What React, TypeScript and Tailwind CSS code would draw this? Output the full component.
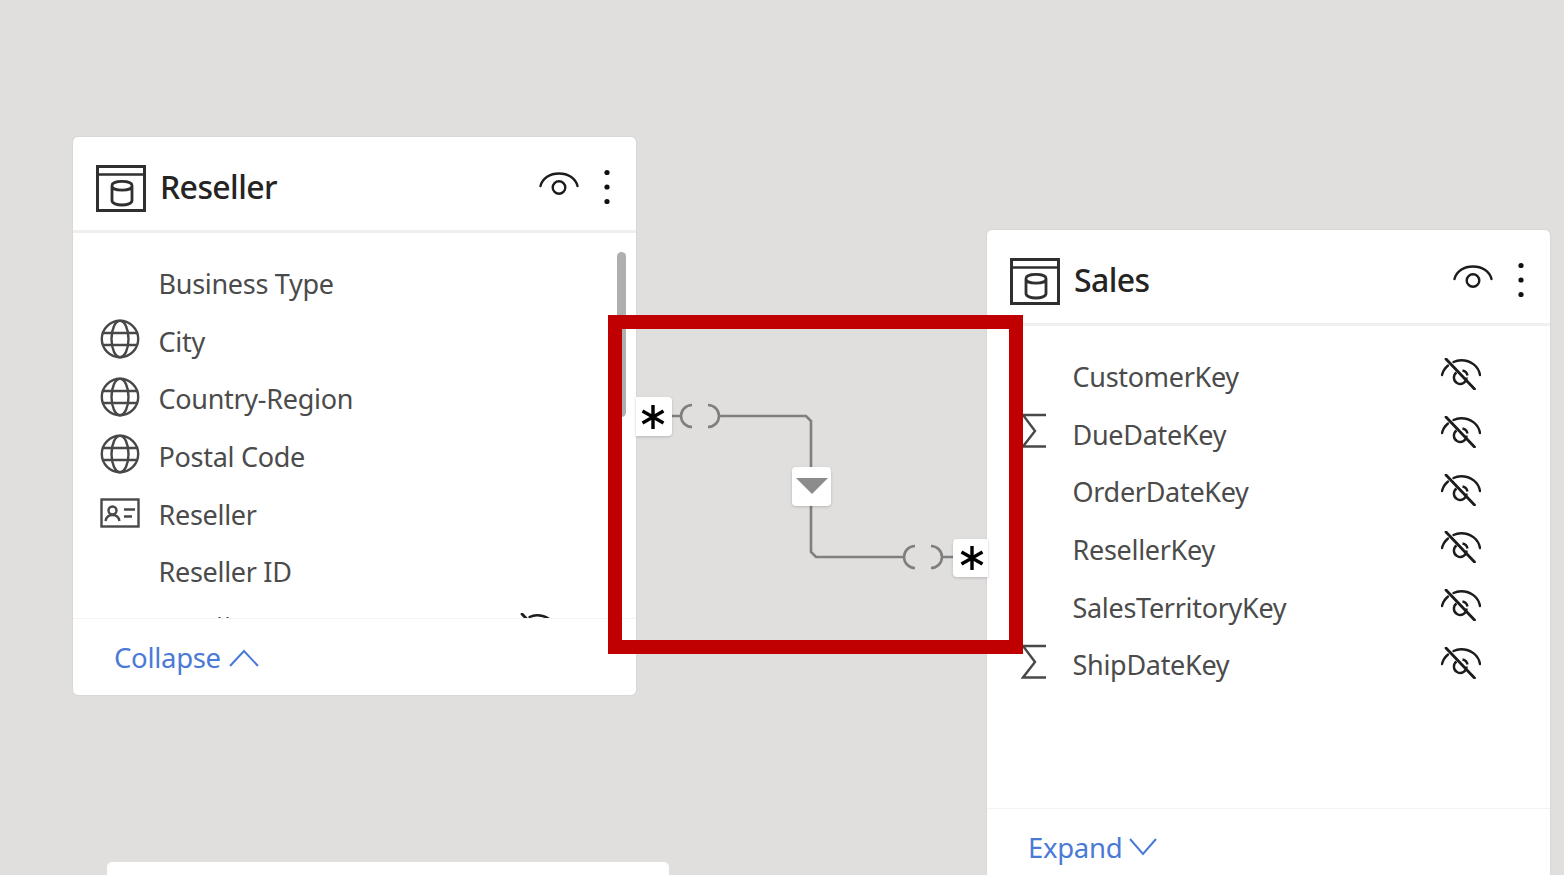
const RESELLER_ROWS = [
  { label: "Business Type" },
  { label: "City", icon: "globe" },
  { label: "Country-Region", icon: "globe" },
  { label: "Postal Code", icon: "globe" },
  { label: "Reseller", icon: "card" },
  { label: "Reseller ID" },
];

const SALES_ROWS = [
  { label: "CustomerKey", hidden: true },
  { label: "DueDateKey", icon: "sigma", hidden: true },
  { label: "OrderDateKey", hidden: true },
  { label: "ResellerKey", hidden: true },
  { label: "SalesTerritoryKey", hidden: true },
  { label: "ShipDateKey", icon: "sigma", hidden: true },
];

function TableIcon() {
  return (
    <svg width="50" height="47" viewBox="0 0 50 47" fill="none" stroke="#2f2f2f" className="mt-[4px] shrink-0">
      <rect x="1.500" y="1.500" width="47" height="44" strokeWidth="3" />
      <path d="M2 9.500h46" strokeWidth="2.600" />
      <path d="M16 20.500c0-5.500 20-5.500 20 0v15c0 6-20 6-20 0z M16 21c0 5.500 20 5.500 20 0" strokeWidth="2.800" />
    </svg>
  );
}

function EyeIcon() {
  return (
    <svg width="40" height="28" viewBox="0 0 40 28" fill="none" stroke="#1c1c1c" strokeWidth="2.400" className="-translate-y-[4px]">
      <path d="M1.500 17C3.500 9 11 4.500 20 4.500S36.500 9 38.500 17" strokeLinecap="round" />
      <circle cx="20" cy="18.500" r="6.300" />
    </svg>
  );
}

function DotsIcon() {
  return (
    <svg width="6" height="36" viewBox="0 0 6 36" fill="#111">
      <circle cx="3" cy="3.500" r="2.600" />
      <circle cx="3" cy="18" r="2.600" />
      <circle cx="3" cy="32.500" r="2.600" />
    </svg>
  );
}

function EyeOffIcon() {
  return (
    <svg width="40" height="32" viewBox="0 0 40 32" fill="none" stroke="#1c1c1c" strokeWidth="2.400" className="shrink-0">
      <path d="M1 17C2 13 4 10 7 7.500M12.500 4C15 2.800 17.500 2.300 20 2.300c10 0 17.500 6 19 14.700" strokeLinecap="round" />
      <path d="M15.500 14.500a6.300 6.300 0 1 0 10 5M21.500 12.500a6.300 6.300 0 0 1 5 5" />
      <path d="M5 1 33.500 31" strokeWidth="2.800" strokeLinecap="round" />
    </svg>
  );
}

function GlobeIcon() {
  return (
    <svg width="40" height="40" viewBox="0 0 40 40" fill="none" stroke="#484848" strokeWidth="2.400" className="-mt-[4px]">
      <circle cx="20" cy="20" r="18.200" />
      <ellipse cx="20" cy="20" rx="8.500" ry="18.200" />
      <path d="M3.500 14h33M3.500 26h33" />
    </svg>
  );
}

function CardIcon() {
  return (
    <svg width="40" height="32" viewBox="0 0 40 32" fill="none" stroke="#484848" strokeWidth="2.400">
      <rect x="1.500" y="1.500" width="37" height="27" />
      <circle cx="12.500" cy="12.500" r="4" />
      <path d="M5.500 23c.8-4 3.500-6 7-6s6.200 2 7 6" />
      <path d="M24 11.500h11M24 18.500h8" />
    </svg>
  );
}

function SigmaIcon() {
  return (
    <svg width="26" height="36" viewBox="0 0 26 36" fill="none" stroke="#484848" strokeWidth="2.400" className="-mt-[6px]">
      <path d="M25 2H2l12 16L2 33.500h23" />
    </svg>
  );
}

function RowIcon({ name }: { name?: string }) {
  if (name === "globe") return <GlobeIcon />;
  if (name === "card") return <CardIcon />;
  if (name === "sigma") return <SigmaIcon />;
  return null;
}

function FieldRow({ label, icon, hidden }: { label: string; icon?: string; hidden?: boolean }) {
  return (
    <div className="flex h-[57.7px] shrink-0 items-center">
      <div className="ml-[27px] flex h-full w-[40px] shrink-0 items-center justify-center">
        <RowIcon name={icon} />
      </div>
      <span className="ml-[18.500px] text-[27px] leading-none tracking-[-0.3px] text-[#4b4b4b]">{label}</span>
      {hidden && (
        <span className="absolute left-[454px] -translate-y-[2px]">
          <EyeOffIcon />
        </span>
      )}
    </div>
  );
}

function TableCard({
  title,
  rows,
  action,
  position,
  listHeight,
  extraRow,
  scrollbar,
}: {
  title: string;
  rows: { label: string; icon?: string; hidden?: boolean }[];
  action: React.ReactNode;
  position: string;
  listHeight: string;
  extraRow?: React.ReactNode;
  scrollbar?: boolean;
}) {
  return (
    <div className={`absolute flex w-[563px] flex-col rounded-[5px] bg-white shadow-[0_0_2px_rgba(0,0,0,0.12)] ${position}`}>
      <div className="flex h-[96px] items-center border-b-[3px] border-[#f0efee] pl-[23px] pt-[6px]">
        <TableIcon />
        <span className="ml-[14px] text-[32px] font-medium leading-none tracking-[-0.6px] text-[#252423]">{title}</span>
        <div className="ml-auto mr-[26px] flex items-center gap-[25px]">
          <EyeIcon />
          <DotsIcon />
        </div>
      </div>
      <div className={`relative flex flex-col overflow-hidden pt-[21.500px] ${listHeight}`}>
        {rows.map((row) => (
          <FieldRow key={row.label} {...row} />
        ))}
        {extraRow}
        {scrollbar && (
          <div className="absolute left-[544px] top-[19px] h-[165px] w-[9px] rounded-[5px] bg-[#afafaf]" />
        )}
      </div>
      <div className="flex h-[77px] items-center border-t border-[#f4f3f2] pl-[41px] pt-[2px] text-[27.500px] leading-none tracking-[-0.3px] text-[#4a7ad6]">
        {action}
      </div>
    </div>
  );
}

function RelationshipLines() {
  return (
    <svg width="400" height="200" viewBox="0 0 400 200" fill="none" stroke="#7f7f7f" strokeWidth="2.600" className="absolute left-[630px] top-[390px]">
      <path d="M42 26h9M89 26h87l5 5v46M181 115v47l5 5h88M312 167h12" />
      <path d="M62 15a11 11 0 0 0 0 22M78 15a11 11 0 0 1 0 22M285 156a11 11 0 0 0 0 22M301 156a11 11 0 0 1 0 22" />
    </svg>
  );
}

function Tile({ position, children }: { position: string; children: React.ReactNode }) {
  return <div className={`absolute flex items-center justify-center bg-white shadow-[0_1px_3px_rgba(0,0,0,0.18)] ${position}`}>{children}</div>;
}

function Asterisk() {
  return (
    <svg width="26" height="26" viewBox="0 0 26 26" fill="none" stroke="#000" strokeWidth="3.400">
      <path d="M13 1v24M2.500 7 23.500 19M2.500 19 23.500 7" />
    </svg>
  );
}

export default function App() {
  return (
    <div className="relative h-[875px] w-[1564px] overflow-hidden bg-[#e0dfdd] font-['Noto_Sans',sans-serif]">
      <TableCard
        title="Reseller"
        rows={RESELLER_ROWS}
        position="left-[73px] top-[137px]"
        listHeight="h-[385px]"
        scrollbar
        extraRow={
          <div className="relative h-[57.6px] shrink-0">
            <div className="absolute left-[145px] top-[16px] h-[4px] w-[3px] rounded-full bg-[#4b4b4b]" />
            <div className="absolute left-[153px] top-[16px] h-[4px] w-[3px] rounded-full bg-[#4b4b4b]" />
            <span className="absolute left-[444px] top-[12px]">
              <EyeOffIcon />
            </span>
          </div>
        }
        action={
          <>
            <span>Collapse</span>
            <svg width="30" height="18" viewBox="0 0 30 18" fill="none" stroke="#4a7ad6" strokeWidth="2" className="ml-[8px]">
              <path d="M1 17 15 2l14 15" />
            </svg>
          </>
        }
      />
      <TableCard
        title="Sales"
        rows={SALES_ROWS}
        position="left-[987px] top-[230px]"
        listHeight="h-[482px]"
        action={
          <>
            <span>Expand</span>
            <svg width="28" height="18" viewBox="0 0 28 18" fill="none" stroke="#4a7ad6" strokeWidth="2" className="ml-[7px] -mt-[2px]">
              <path d="M1 1l13 15L27 1" />
            </svg>
          </>
        }
      />
      <div className="absolute left-[107px] top-[862px] h-[60px] w-[562px] rounded-[5px] bg-white" />

      <RelationshipLines />
      <Tile position="left-[636px] top-[397px] h-[39px] w-[36px] rounded-r-[4px] pr-[2px]">
        <Asterisk />
      </Tile>
      <Tile position="left-[953px] top-[539px] h-[38px] w-[35px] rounded-l-[4px] pl-[3px]">
        <Asterisk />
      </Tile>
      <Tile position="left-[792px] top-[467px] h-[39px] w-[39px] rounded-[4px]">
        <svg width="32" height="17" viewBox="0 0 32 17" fill="#8c8c8c">
          <path d="M0 0h32L16 16z" />
        </svg>
      </Tile>

      <div className="absolute left-[608px] top-[315px] h-[339px] w-[415px] border-[14px] border-[#c00000]" />
    </div>
  );
}
